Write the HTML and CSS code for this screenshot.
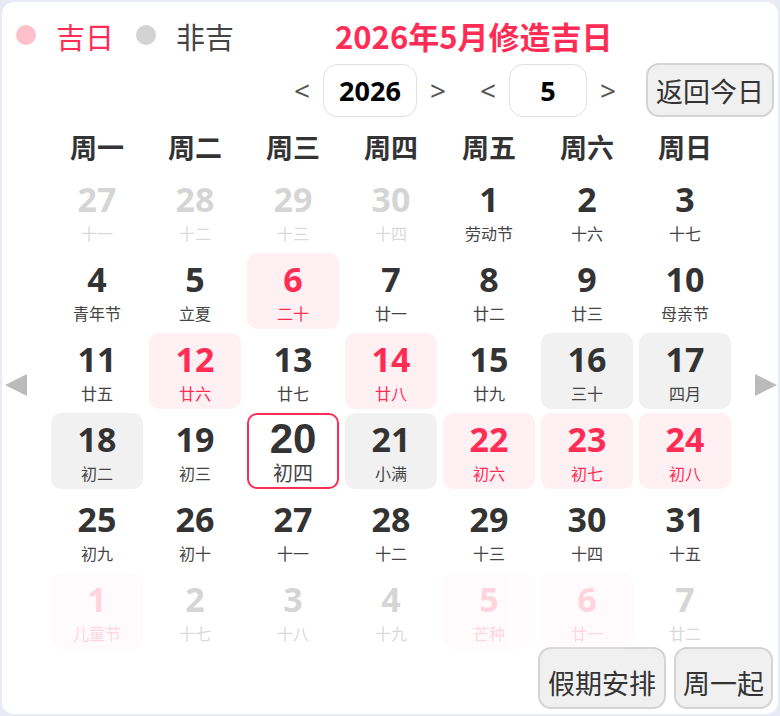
FILE: index.html
```html
<!DOCTYPE html>
<html lang="zh-CN">
<head>
<meta charset="utf-8">
<title>2026年5月修造吉日</title>
<link rel="stylesheet" href="styles.css">
</head>
<body>
<div class="card">
  <div class="top">
    <span class="dot dot-ji"></span><span class="legend legend-ji">吉日</span>
    <span class="dot dot-fei"></span><span class="legend legend-fei">非吉</span>
    <span class="title">2026年5月修造吉日</span>
  </div>
  <div class="nav">
    <span class="arrow">&lt;</span>
    <span class="num-box year">2026</span>
    <span class="arrow">&gt;</span>
    <span class="arrow arrow-gap">&lt;</span>
    <span class="num-box month">5</span>
    <span class="arrow">&gt;</span>
    <button class="btn btn-today">返回今日</button>
  </div>
  <div class="main">
    <span class="side side-left"></span>
    <div class="cal">
      <div class="weekdays">
        <span>周一</span><span>周二</span><span>周三</span><span>周四</span><span>周五</span><span>周六</span><span>周日</span>
      </div>
      <div class="grid">
        <div class="cell other"><span class="n">27</span><span class="l">十一</span></div>
        <div class="cell other"><span class="n">28</span><span class="l">十二</span></div>
        <div class="cell other"><span class="n">29</span><span class="l">十三</span></div>
        <div class="cell other"><span class="n">30</span><span class="l">十四</span></div>
        <div class="cell"><span class="n">1</span><span class="l">劳动节</span></div>
        <div class="cell"><span class="n">2</span><span class="l">十六</span></div>
        <div class="cell"><span class="n">3</span><span class="l">十七</span></div>

        <div class="cell"><span class="n">4</span><span class="l">青年节</span></div>
        <div class="cell"><span class="n">5</span><span class="l">立夏</span></div>
        <div class="cell ji"><span class="n">6</span><span class="l">二十</span></div>
        <div class="cell"><span class="n">7</span><span class="l">廿一</span></div>
        <div class="cell"><span class="n">8</span><span class="l">廿二</span></div>
        <div class="cell"><span class="n">9</span><span class="l">廿三</span></div>
        <div class="cell"><span class="n">10</span><span class="l">母亲节</span></div>

        <div class="cell"><span class="n">11</span><span class="l">廿五</span></div>
        <div class="cell ji"><span class="n">12</span><span class="l">廿六</span></div>
        <div class="cell"><span class="n">13</span><span class="l">廿七</span></div>
        <div class="cell ji"><span class="n">14</span><span class="l">廿八</span></div>
        <div class="cell"><span class="n">15</span><span class="l">廿九</span></div>
        <div class="cell fei"><span class="n">16</span><span class="l">三十</span></div>
        <div class="cell fei"><span class="n">17</span><span class="l">四月</span></div>

        <div class="cell fei"><span class="n">18</span><span class="l">初二</span></div>
        <div class="cell"><span class="n">19</span><span class="l">初三</span></div>
        <div class="cell today"><span class="n">20</span><span class="l">初四</span></div>
        <div class="cell fei"><span class="n">21</span><span class="l">小满</span></div>
        <div class="cell ji"><span class="n">22</span><span class="l">初六</span></div>
        <div class="cell ji"><span class="n">23</span><span class="l">初七</span></div>
        <div class="cell ji"><span class="n">24</span><span class="l">初八</span></div>

        <div class="cell"><span class="n">25</span><span class="l">初九</span></div>
        <div class="cell"><span class="n">26</span><span class="l">初十</span></div>
        <div class="cell"><span class="n">27</span><span class="l">十一</span></div>
        <div class="cell"><span class="n">28</span><span class="l">十二</span></div>
        <div class="cell"><span class="n">29</span><span class="l">十三</span></div>
        <div class="cell"><span class="n">30</span><span class="l">十四</span></div>
        <div class="cell"><span class="n">31</span><span class="l">十五</span></div>

        <div class="cell ji other"><span class="n">1</span><span class="l">儿童节</span></div>
        <div class="cell other"><span class="n">2</span><span class="l">十七</span></div>
        <div class="cell other"><span class="n">3</span><span class="l">十八</span></div>
        <div class="cell other"><span class="n">4</span><span class="l">十九</span></div>
        <div class="cell ji other"><span class="n">5</span><span class="l">芒种</span></div>
        <div class="cell ji other"><span class="n">6</span><span class="l">廿一</span></div>
        <div class="cell other"><span class="n">7</span><span class="l">廿二</span></div>
      </div>
    </div>
    <span class="side side-right"></span>
  </div>
  <div class="foot">
    <button class="btn btn-foot btn-holiday">假期安排</button>
    <button class="btn btn-foot btn-week">周一起</button>
  </div>
</div>
</body>
</html>
```

FILE: styles.css
```css
html, body {
  margin: 0;
  padding: 0;
}
body {
  background: #e8ebf5;
  font-family: "Noto Sans", "Noto Sans CJK SC", sans-serif;
  color: #333;
}
.card {
  margin: 2px;
  height: 712px;
  background: #fff;
  border-radius: 12px;
  box-sizing: border-box;
  overflow: hidden;
}
.top {
  display: flex;
  align-items: center;
  height: 40px;
  padding: 14px 0 0 14px;
}
.dot {
  width: 20px;
  height: 20px;
  border-radius: 50%;
  margin-top: -3px;
}
.dot-ji { background: #ffc0cb; }
.dot-fei { background: #d3d3d3; }
.legend {
  font-family: "Noto Sans CJK SC", sans-serif;
  font-size: 29px;
  line-height: 40px;
  margin-left: 20px;
}
.legend-ji { color: #ff2d55; margin-right: 22px; }
.legend-fei { color: #444; }
.title {
  margin-left: 101px;
  font-family: "Noto Sans CJK SC", sans-serif;
  font-weight: 700;
  font-size: 31px;
  line-height: 40px;
  color: #ff2d55;
}
.nav {
  display: flex;
  align-items: center;
  justify-content: flex-end;
  height: 54px;
  margin-top: 7px;
  padding-right: 4px;
}
.arrow {
  width: 28px;
  text-align: center;
  font-size: 28px;
  color: #555;
  line-height: 54px;
}
.arrow-gap { margin-left: 22px; }
.num-box {
  box-sizing: border-box;
  height: 53px;
  margin: 0 7px;
  border: 1px solid #e0e0e0;
  border-radius: 14px;
  display: flex;
  align-items: center;
  justify-content: center;
  font-weight: 700;
  font-size: 27px;
  color: #000;
}
.year { width: 94px; }
.month { width: 78px; }
.btn {
  box-sizing: border-box;
  background: #f0f0f0;
  border: 2px solid #d4d4d4;
  border-radius: 13px;
  font-family: "Noto Sans CJK SC", sans-serif;
  font-size: 27px;
  color: #333;
  padding: 0;
  margin: 0;
}
.btn-today {
  width: 128px;
  height: 54px;
  margin-left: 24px;
}
.main {
  display: flex;
  margin-top: 10px;
}
.side {
  width: 0;
  height: 0;
  border-top: 11.5px solid transparent;
  border-bottom: 11.5px solid transparent;
  margin-top: 247px;
}
.side-left {
  border-right: 22px solid #bbb;
  margin-left: 3px;
  margin-right: 24px;
}
.side-right {
  border-left: 22px solid #bbb;
  margin-left: 24px;
}
.cal {
  width: 680px;
}
.weekdays {
  display: grid;
  grid-template-columns: repeat(7, 92px);
  column-gap: 6px;
  height: 40px;
}
.weekdays span {
  text-align: center;
  font-family: "Noto Sans CJK SC", sans-serif;
  font-weight: 700;
  font-size: 27px;
  line-height: 40px;
  color: #333;
}
.grid {
  margin-top: 6px;
  display: grid;
  grid-template-columns: repeat(7, 92px);
  grid-auto-rows: 76px;
  gap: 4px 6px;
}
.cell {
  display: flex;
  flex-direction: column;
  align-items: center;
  border-radius: 10px;
  padding-top: 6px;
  box-sizing: border-box;
}
.n {
  font-weight: 700;
  font-size: 34px;
  line-height: 40px;
  color: #333;
}
.l {
  margin-top: 4px;
  font-family: "Noto Sans CJK SC", sans-serif;
  font-size: 16px;
  line-height: 20px;
  color: #444;
}
.ji { background: #fff0f3; }
.ji .n, .ji .l { color: #ff2d55; }
.fei { background: #f1f1f1; }
.other { opacity: 0.2; }
.today {
  padding-top: 3px;
  box-shadow: inset 0 0 0 2px #ff2d55;
}
.today .n {
  font-family: "Liberation Sans", "Noto Sans", sans-serif;
  font-size: 42px;
  line-height: 46px;
}
.today .l {
  font-family: "Liberation Sans", "Noto Sans CJK SC", sans-serif;
  font-size: 20px;
  line-height: 24px;
  margin-top: 0;
}
.foot {
  display: flex;
  justify-content: flex-end;
  gap: 8px;
  margin-top: -2px;
  padding-right: 5px;
}
.btn-foot {
  height: 62px;
  padding-top: 8px;
}
.btn-holiday { width: 128px; }
.btn-week { width: 99px; }
```
